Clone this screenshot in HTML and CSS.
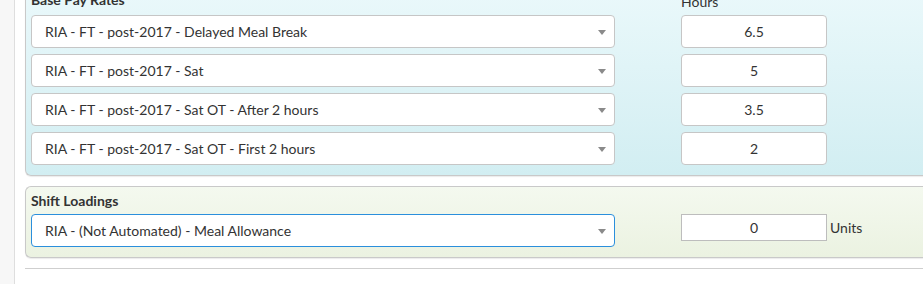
FILE: index.html
```html
<!DOCTYPE html>
<html>
<head>
<meta charset="UTF-8">
<title>Pay Rates</title>
<link rel="stylesheet" href="styles.css">
</head>
<body>
    <div class="app">
        <div class="sidebar"></div>
        <div class="main">
            <div class="panel panel-base">
                <div class="grid">
                    <div class="panel-title base-title">Base Pay Rates</div>
                    <div class="col-title">Hours</div>
                    <div></div>

                    <div class="select"><span>RIA - FT - post-2017 - Delayed Meal Break</span><i class="caret"></i></div>
                    <div class="field">6.5</div>
                    <div></div>

                    <div class="select"><span>RIA - FT - post-2017 - Sat</span><i class="caret"></i></div>
                    <div class="field">5</div>
                    <div></div>

                    <div class="select"><span>RIA - FT - post-2017 - Sat OT - After 2 hours</span><i class="caret"></i></div>
                    <div class="field">3.5</div>
                    <div></div>

                    <div class="select"><span>RIA - FT - post-2017 - Sat OT - First 2 hours</span><i class="caret"></i></div>
                    <div class="field">2</div>
                    <div></div>
                </div>
            </div>

            <div class="panel panel-shift">
                <div class="panel-title shift-title">Shift Loadings</div>
                <div class="grid">
                    <div class="select focus"><span>RIA - (Not Automated) - Meal Allowance</span><i class="caret"></i></div>
                    <div class="field plain">0</div>
                    <div class="unit">Units</div>
                </div>
            </div>

            <hr class="divider">
        </div>
    </div>
</body>
</html>
```

FILE: styles.css
```css
html, body {
    margin: 0;
    padding: 0;
    height: 100%;
    overflow: hidden;
}
body {
    font-family: Lato, "Open Sans", sans-serif;
    font-size: 14px;
    color: #333;
    background: #fff;
}
.app {
    display: flex;
    height: 100%;
}
.sidebar {
    width: 14px;
    flex: none;
    background: #f7f7f7;
    border-right: 1px solid #dedede;
}
.main {
    flex: 1;
    padding-left: 10px;
    overflow: hidden;
}
.panel {
    border: 1px solid #c9c9c9;
    border-right: none;
    border-radius: 6px 0 0 6px;
    margin-right: -10px;
    padding: 0 0 0 5px;
}
.panel-base {
    margin-top: -42px;
    padding-top: 30px;
    padding-bottom: 10px;
    background: linear-gradient(#eefafc, #d2eef2);
    box-shadow: 0 1px 1px rgba(0, 0, 0, 0.08);
}
.panel-shift {
    margin-top: 10px;
    padding-top: 5px;
    padding-bottom: 10px;
    background: linear-gradient(#f4f9ef, #ebf2e1);
    box-shadow: 0 1px 1px rgba(0, 0, 0, 0.08);
}
.grid {
    display: grid;
    grid-template-columns: 584px 146px auto;
    column-gap: 66px;
    row-gap: 6px;
    align-items: start;
}
.panel-title {
    font-weight: bold;
    font-size: 14px;
    line-height: 16px;
    color: #333;
}
.base-title {
    padding-top: 3px;
}
.col-title {
    font-size: 14px;
    line-height: 16px;
    padding-top: 5px;
    margin-bottom: -1px;
}
.shift-title {
    line-height: 17px;
    margin-bottom: 5px;
}
.select {
    box-sizing: border-box;
    height: 33px;
    background: #fff;
    border: 1px solid #c6c6c6;
    border-radius: 4px;
    display: flex;
    align-items: center;
    justify-content: space-between;
    padding: 0 8px 0 13px;
}
.select.focus {
    border-color: #2b8fdc;
}
.caret {
    width: 0;
    height: 0;
    border-left: 4px solid transparent;
    border-right: 4px solid transparent;
    border-top: 5px solid #8a8a8a;
    margin-top: 2px;
}
.field {
    box-sizing: border-box;
    height: 33px;
    line-height: 31px;
    background: #fff;
    border: 1px solid #c6c6c6;
    border-radius: 4px;
    text-align: center;
}
.field.plain {
    height: 27px;
    line-height: 25px;
    border-radius: 0;
    border-color: #bdbdbd;
}
.unit {
    margin-left: -63px;
    line-height: 27px;
}
.divider {
    border: none;
    border-top: 1px solid #cfcfcf;
    margin: 10px -10px 0 0;
}
```
